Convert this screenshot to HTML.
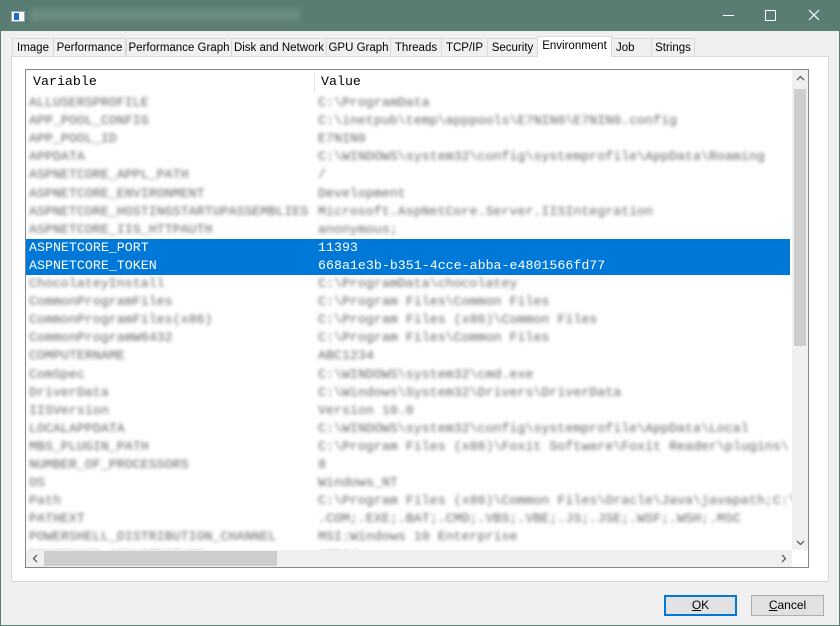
<!DOCTYPE html>
<html><head><style>
body{margin:0;width:840px;height:626px;background:#f0f0f0;position:relative;overflow:hidden;font-family:"Segoe UI","Liberation Sans",sans-serif;}
.frame{position:absolute;left:0;top:0;width:838px;height:624px;border:1px solid #5a7d73;}
.title{position:absolute;left:0;top:0;width:840px;height:31px;background:#5a7d73;}
.tab{position:absolute;top:38px;height:18px;border:1px solid #d9d9d9;border-bottom:none;background:#f0f0f0;font-size:11.5px;line-height:18px;text-align:center;box-sizing:border-box;color:#000;}
.tab.sel{top:36px;height:21px;background:#fff;line-height:19px;z-index:2;}
.panel{position:absolute;left:11px;top:56px;width:818px;height:526px;background:#fff;border:1px solid #d9d9d9;box-sizing:border-box;}
.list{position:absolute;left:25px;top:69px;width:784px;height:499px;border:1px solid #828790;box-sizing:border-box;background:#fff;overflow:hidden;font-family:"Liberation Mono",monospace;font-size:13.3px;}
.hdr{position:absolute;left:0;top:0;width:766px;height:23px;line-height:24px;}
.row{position:absolute;left:0;width:764px;height:18px;line-height:18px;white-space:nowrap;}
.row span{position:absolute;}
.b{color:#666;filter:blur(1.9px);}
.sel2{background:#0078d7;color:#fff;}
</style></head><body>
<div class="frame"></div>
<div class="title">
<div style="position:absolute;left:11px;top:11px;width:12px;height:9px;background:#fff;border:1px solid #9ab;"><div style="position:absolute;left:2px;top:1px;width:5px;height:7px;background:#1a6fd0"></div></div>
<div style="position:absolute;left:30px;top:9px;width:270px;height:12px;background:#6f8f87;filter:blur(3px);opacity:.9"></div>
<div style="position:absolute;left:723px;top:15px;width:11px;height:1px;background:#fff"></div>
<div style="position:absolute;left:765px;top:10px;width:9px;height:9px;border:1px solid #fff"></div>
<svg style="position:absolute;left:808px;top:9px" width="12" height="12"><path d="M1 1L11 11M11 1L1 11" stroke="#fff" stroke-width="1.2"/></svg>
</div>
<div class="panel"></div>
<div class="tab" style="left:12px;width:42px">Image</div>
<div class="tab" style="left:53px;width:73px">Performance</div>
<div class="tab" style="left:126px;width:106px">Performance Graph</div>
<div class="tab" style="left:231px;width:96px">Disk and Network</div>
<div class="tab" style="left:326px;width:65px">GPU Graph</div>
<div class="tab" style="left:390px;width:52px">Threads</div>
<div class="tab" style="left:441px;width:47px">TCP/IP</div>
<div class="tab" style="left:487px;width:51px">Security</div>
<div class="tab sel" style="left:537px;width:75px">Environment</div>
<div class="tab" style="left:611px;width:41px;text-align:left;padding-left:4px">Job</div>
<div class="tab" style="left:651px;width:44px">Strings</div>
<div class="list">
<div class="hdr"><span style="position:absolute;left:7px">Variable</span><span style="position:absolute;left:288px;top:2px;width:1px;height:20px;background:#e5e5e5"></span><span style="position:absolute;left:295px">Value</span></div>
<div id="rows"></div>
<div style="position:absolute;left:766px;top:0;width:16px;height:480px;background:#f0f0f0"></div>
<div style="position:absolute;left:768px;top:19px;width:12px;height:257px;background:#cdcdcd"></div>
<svg style="position:absolute;left:770px;top:5px" width="9" height="6"><path d="M1 5L4.5 1.5L8 5" stroke="#606060" stroke-width="1.3" fill="none"/></svg>
<svg style="position:absolute;left:770px;top:470px" width="9" height="6"><path d="M1 1L4.5 4.5L8 1" stroke="#606060" stroke-width="1.3" fill="none"/></svg>
<div style="position:absolute;left:0;top:480px;width:766px;height:17px;background:#f0f0f0"></div>
<div style="position:absolute;left:18px;top:481px;width:233px;height:15px;background:#cdcdcd"></div>
<svg style="position:absolute;left:6px;top:484px" width="6" height="9"><path d="M5 1L1.5 4.5L5 8" stroke="#606060" stroke-width="1.3" fill="none"/></svg>
<svg style="position:absolute;left:755px;top:484px" width="6" height="9"><path d="M1 1L4.5 4.5L1 8" stroke="#606060" stroke-width="1.3" fill="none"/></svg>
</div>
<div style="position:absolute;left:664px;top:595px;width:73px;height:21px;border:2px solid #0078d7;background:#e1e1e1;box-sizing:border-box;font-size:12px;text-align:center;line-height:17px"><u>O</u>K</div>
<div style="position:absolute;left:751px;top:595px;width:73px;height:21px;border:1px solid #adadad;background:#e1e1e1;box-sizing:border-box;font-size:12px;text-align:center;line-height:19px"><u>C</u>ancel</div>
<script>
var d=[["ALLUSERSPROFILE","C:\\ProgramData"],["APP_POOL_CONFIG","C:\\inetpub\\temp\\apppools\\E7NIN0\\E7NIN0.config"],["APP_POOL_ID","E7NIN0"],["APPDATA","C:\\WINDOWS\\system32\\config\\systemprofile\\AppData\\Roaming"],["ASPNETCORE_APPL_PATH","/"],["ASPNETCORE_ENVIRONMENT","Development"],["ASPNETCORE_HOSTINGSTARTUPASSEMBLIES","Microsoft.AspNetCore.Server.IISIntegration"],["ASPNETCORE_IIS_HTTPAUTH","anonymous;"],["ASPNETCORE_PORT","11393",1],["ASPNETCORE_TOKEN","668a1e3b-b351-4cce-abba-e4801566fd77",1],["ChocolateyInstall","C:\\ProgramData\\chocolatey"],["CommonProgramFiles","C:\\Program Files\\Common Files"],["CommonProgramFiles(x86)","C:\\Program Files (x86)\\Common Files"],["CommonProgramW6432","C:\\Program Files\\Common Files"],["COMPUTERNAME","ABC1234"],["ComSpec","C:\\WINDOWS\\system32\\cmd.exe"],["DriverData","C:\\Windows\\System32\\Drivers\\DriverData"],["IISVersion","Version 10.0"],["LOCALAPPDATA","C:\\WINDOWS\\system32\\config\\systemprofile\\AppData\\Local"],["MBS_PLUGIN_PATH","C:\\Program Files (x86)\\Foxit Software\\Foxit Reader\\plugins\\"],["NUMBER_OF_PROCESSORS","8"],["OS","Windows_NT"],["Path","C:\\Program Files (x86)\\Common Files\\Oracle\\Java\\javapath;C:\\"],["PATHEXT",".COM;.EXE;.BAT;.CMD;.VBS;.VBE;.JS;.JSE;.WSF;.WSH;.MSC"],["POWERSHELL_DISTRIBUTION_CHANNEL","MSI:Windows 10 Enterprise"],["PROCESSOR_ARCHITECTURE","AMD64"]];
var h="";d.forEach(function(r,i){var t=24+i*18.1;h+='<div class="row'+(r[2]?' sel2':'')+'" style="top:'+t+'px"><span class="'+(r[2]?'':'b')+'" style="left:3px">'+r[0]+'</span><span class="'+(r[2]?'':'b')+'" style="left:292px">'+r[1]+'</span></div>';});
document.getElementById("rows").innerHTML=h;
</script>
</body></html>
